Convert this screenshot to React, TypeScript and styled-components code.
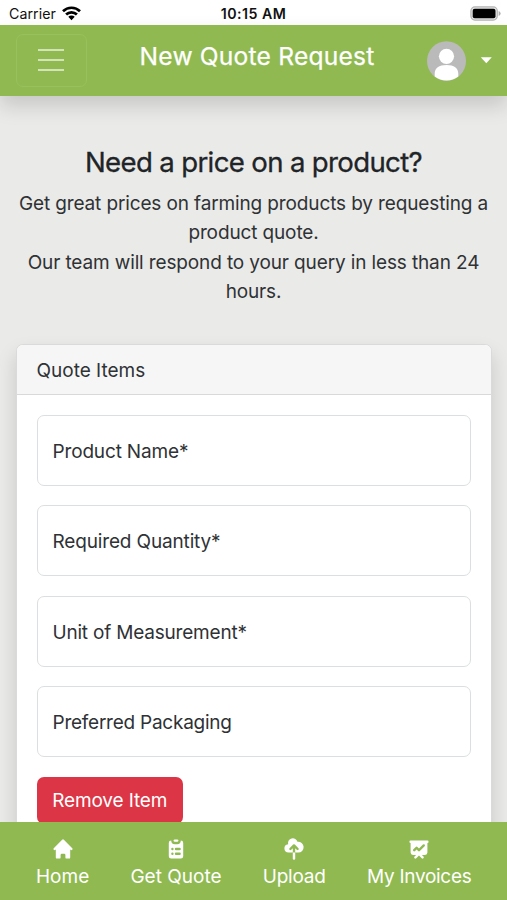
import React from "react";
import styled, { createGlobalStyle } from "styled-components";
import { HiHome, HiClipboardList, HiCloudUpload, HiPresentationChartLine } from "react-icons/hi";

const GlobalStyle = createGlobalStyle`
  * { box-sizing: border-box; }
  html, body, #root { height: 100%; }
  body {
    margin: 0;
    overflow: hidden;
    font-family: Inter, "Liberation Sans", sans-serif;
    font-size: 19px;
    line-height: 29.4px;
    color: #2f3235;
    background: #eaeae8;
  }
  h1, h2, p { margin: 0; }
`;

const Screen = styled.div`
  height: 900px;
  display: flex;
  flex-direction: column;
  overflow: hidden;
`;

const StatusBar = styled.div`
  flex: none;
  height: 25px;
  padding: 2px 6px 0 9px;
  display: grid;
  grid-template-columns: 1fr auto 1fr;
  align-items: center;
  background: #fff;
  color: #111;
  font-size: 14.2px;
  line-height: 20px;
`;

const Carrier = styled.div`
  display: flex;
  align-items: center;
  gap: 6px;
  letter-spacing: 0.05px;
`;

const Clock = styled.div`
  margin-right: 3px;
  font-weight: 600;
  letter-spacing: 0.45px;
`;

const BatterySlot = styled.div`
  display: flex;
  justify-content: flex-end;
`;

const NavBar = styled.header`
  flex: none;
  position: relative;
  z-index: 1;
  height: 71px;
  padding: 0 15px 0 16px;
  display: grid;
  grid-template-columns: 71px 1fr 65px;
  align-items: center;
  background: #90ba51;
  box-shadow: 0 10px 19px rgba(0, 0, 0, 0.15);
`;

const MenuButton = styled.button`
  width: 71px;
  height: 53px;
  padding: 0 1px 2px 0;
  display: flex;
  align-items: center;
  justify-content: center;
  border: 1.5px solid #98c05d;
  border-radius: 7px;
  background: transparent;
`;

const Title = styled.h1`
  padding: 0 0 9px 0;
  text-align: center;
  color: #fff;
  font-size: 24.6px;
  font-weight: 400;
  -webkit-text-stroke: 0.25px #fff;
  line-height: 30px;
  letter-spacing: 0.2px;
  white-space: nowrap;
`;

const Profile = styled.div`
  display: flex;
  align-items: center;
  justify-content: space-between;
`;

const Main = styled.main`
  flex: 1;
  min-height: 0;
  overflow: hidden;
  padding: 49.5px 16px 0;
`;

const Intro = styled.section`
  text-align: center;
  white-space: nowrap;
`;

const Heading = styled.h2`
  margin-bottom: 10.3px;
  color: #212427;
  font-size: 27.6px;
  font-weight: 400;
  -webkit-text-stroke: 0.3px #212427;
  line-height: 33px;
  letter-spacing: -0.66px;
`;

const Line = styled.div`
  letter-spacing: -0.13px;
`;

const Card = styled.section`
  margin-top: 37.5px;
  width: 476px;
  height: 640px;
  border: 1.3px solid #d9dad9;
  border-radius: 7px;
  background: #fff;
  box-shadow: 0 10px 19px rgba(0, 0, 0, 0.15);
`;

const CardHeader = styled.div`
  height: 50px;
  padding: 11px 19.5px 0;
  border-bottom: 1.3px solid #d8d9d8;
  border-radius: 6px 6px 0 0;
  background: #f6f6f6;
`;

const Fields = styled.div`
  padding: 19.7px 19.5px 0;
  display: flex;
  flex-direction: column;
  align-items: flex-start;
  gap: 19.5px;
`;

const Field = styled.label`
  width: 434.6px;
  height: 71px;
  padding: 2.8px 15px 0;
  display: flex;
  align-items: center;
  border: 1.3px solid #dcdfe1;
  border-radius: 7px;
`;

const RemoveButton = styled.button`
  height: 47px;
  width: 146.5px;
  padding: 1px 0 0;
  border: 0;
  border-radius: 7px;
  background: #dc3545;
  color: #fff;
  font: inherit;
`;

const BottomNav = styled.nav`
  flex: none;
  position: relative;
  z-index: 1;
  height: 78.5px;
  padding: 15px 35.5px 0 36px;
  display: flex;
  justify-content: space-between;
  background: #90ba51;
  color: #fff;
`;

const Tab = styled.a`
  display: flex;
  flex-direction: column;
  align-items: center;
  gap: 1.5px;
  svg { width: 24px; height: 24px; }
`;

const Text = styled.span<{ $track?: number }>`
  letter-spacing: ${(p) => p.$track ?? 0}px;
`;

const Wifi = () => (
  <svg width="19" height="15" viewBox="0 0 19 15" fill="none" stroke="#000" strokeWidth="2.7">
    <path d="M1 5.2a12.2 12.2 0 0 1 17 0M4.1 8.5a7.7 7.7 0 0 1 10.8 0" />
    <path d="M6.3 10.8a4.5 4.5 0 0 1 6.4 0L9.5 14.2z" fill="#000" stroke="none" />
  </svg>
);

const Battery = () => (
  <svg width="31" height="15" viewBox="0 0 31 15">
    <rect x="0.9" y="0.9" width="26.4" height="13.2" rx="4" fill="#e4e4e4" stroke="#b4b4b4" strokeWidth="1.2" />
    <rect x="2.7" y="2.7" width="22.8" height="9.6" rx="2" fill="#000" />
    <path d="M28.6 5q2 .7 2 2.5t-2 2.5z" fill="#adadad" />
  </svg>
);

const MenuIcon = () => (
  <svg width="28" height="24" viewBox="0 0 28 24" stroke="#d3e4b9" strokeWidth="2.2">
    <path d="M1 2h26M1 12h26M1 22h26" />
  </svg>
);

const Avatar = () => (
  <svg width="39" height="40" viewBox="0 0 39 40">
    <ellipse cx="19.5" cy="20" rx="19.5" ry="19.7" fill="#bababa" />
    <circle cx="19.5" cy="15.3" r="7.6" fill="#fff" />
    <path d="M7.7 35.5V33c0-6 4.2-9 11.8-9s11.8 3 11.8 9v2.5a19.5 19.7 0 0 1-23.6 0z" fill="#fff" />
  </svg>
);

const Caret = () => (
  <svg width="12" height="7" viewBox="0 0 12 7">
    <path d="M.8.3h11L6.3 6.3z" fill="#fff" />
  </svg>
);

const fields = [
  { label: "Product Name*", track: -0.16 },
  { label: "Required Quantity*", track: -0.15 },
  { label: "Unit of Measurement*", track: -0.2 },
  { label: "Preferred Packaging", track: -0.24 },
];

const tabs = [
  { label: "Home", Icon: HiHome, track: 0 },
  { label: "Get Quote", Icon: HiClipboardList, track: 0 },
  { label: "Upload", Icon: HiCloudUpload, track: -0.2 },
  { label: "My Invoices", Icon: HiPresentationChartLine, track: -0.28 },
];

export default function App() {
  return (
    <Screen>
      <GlobalStyle />
      <StatusBar>
        <Carrier>Carrier <Wifi /></Carrier>
        <Clock>10:15 AM</Clock>
        <BatterySlot><Battery /></BatterySlot>
      </StatusBar>
      <NavBar>
        <MenuButton aria-label="Menu"><MenuIcon /></MenuButton>
        <Title>New Quote Request</Title>
        <Profile><Avatar /><Caret /></Profile>
      </NavBar>
      <Main>
        <Intro>
          <Heading>Need a price on a product?</Heading>
          <Line>Get great prices on farming products by requesting a</Line>
          <Line>product quote.</Line>
          <Line>Our team will respond to your query in less than 24</Line>
          <Line>hours.</Line>
        </Intro>
        <Card>
          <CardHeader><Text>Quote Items</Text></CardHeader>
          <Fields>
            {fields.map((f) => (
              <Field key={f.label}><Text $track={f.track}>{f.label}</Text></Field>
            ))}
            <RemoveButton><Text $track={-0.13}>Remove Item</Text></RemoveButton>
          </Fields>
        </Card>
      </Main>
      <BottomNav>
        {tabs.map(({ label, Icon, track }) => (
          <Tab key={label}><Icon /><Text $track={track}>{label}</Text></Tab>
        ))}
      </BottomNav>
    </Screen>
  );
}
